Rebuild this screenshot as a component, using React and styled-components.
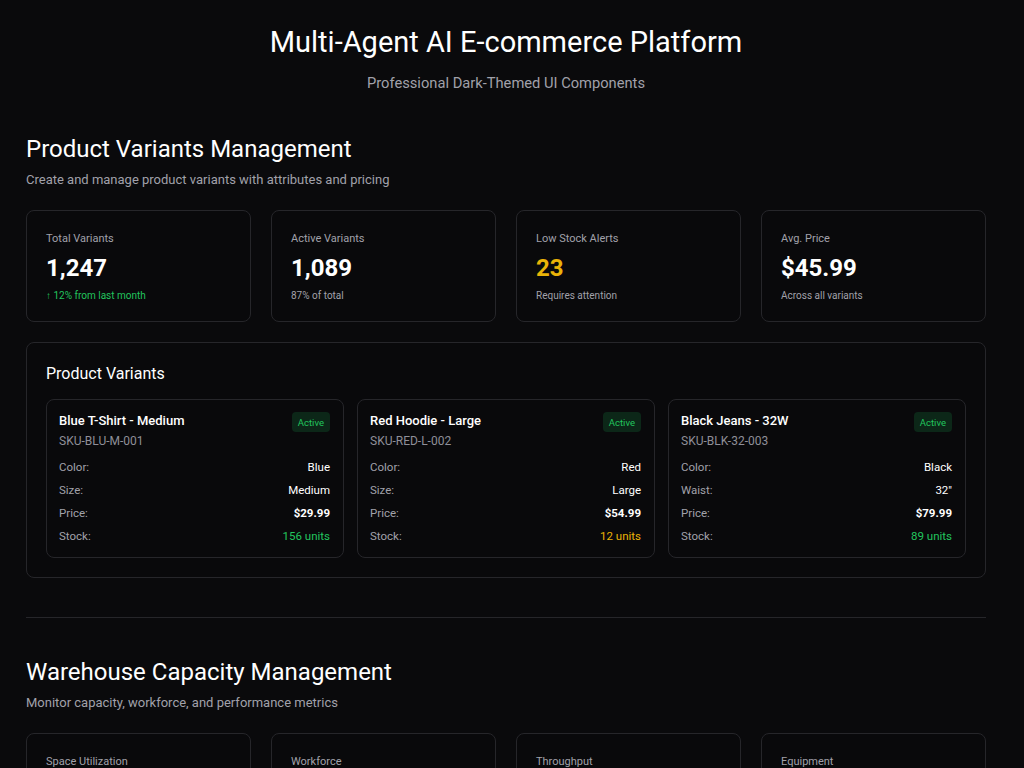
import React from "react";
import styled, { createGlobalStyle } from "styled-components";

const Global = createGlobalStyle`
  html, body { margin: 0; padding: 0; }
  body {
    background: #0a0a0c;
    color: #fafafa;
    font-family: Roboto, "Liberation Sans", Arial, sans-serif;
  }
  * { box-sizing: border-box; }
`;

const Page = styled.div`
  max-width: 1009px;
  padding: 24px 23px 40px 26px;
`;

const Header = styled.header`
  text-align: center;
  margin-bottom: 41px;
`;

const Title = styled.h1`
  margin: 0;
  font-size: 29px;
  line-height: 36px;
  font-weight: 400;
  color: #ffffff;
`;

const Subtitle = styled.p`
  margin: 13px 0 0;
  font-size: 14.7px;
  line-height: 20px;
  color: #a1a1aa;
`;

const Section = styled.section``;

const SectionTitle = styled.h2`
  margin: 0;
  font-size: 24px;
  line-height: 30px;
  font-weight: 400;
  color: #ffffff;
`;

const SectionDesc = styled.p`
  margin: 7px 0 21px;
  font-size: 13px;
  line-height: 18px;
  color: #a1a1aa;
`;

const StatGrid = styled.div`
  display: grid;
  grid-template-columns: repeat(4, 1fr);
  gap: 20px;
`;

const Card = styled.div`
  background: #09090b;
  border: 1px solid #26262a;
  border-radius: 8px;
`;

const StatCard = styled(Card)`
  padding: 20px 19px 18px;
  display: flex;
  flex-direction: column;
`;

const StatLabel = styled.div`
  font-size: 11px;
  line-height: 16px;
  color: #a1a1aa;
`;

const StatValue = styled.div`
  margin-top: 7px;
  font-size: 24px;
  line-height: 28px;
  font-weight: 700;
  color: ${(p) => p.$color || "#ffffff"};
`;

const StatSub = styled.div`
  margin-top: 7px;
  font-size: 10px;
  line-height: 14px;
  color: ${(p) => p.$color || "#a1a1aa"};
`;

const Panel = styled(Card)`
  margin-top: 20px;
  padding: 20px 19px 19px;
`;

const PanelTitle = styled.h3`
  margin: 0 0 14px;
  font-size: 16px;
  line-height: 22px;
  font-weight: 400;
  color: #ffffff;
`;

const VariantGrid = styled.div`
  display: grid;
  grid-template-columns: repeat(3, 1fr);
  gap: 13px;
`;

const VariantCard = styled(Card)`
  padding: 12px 13px 13px 12px;
`;

const VariantHead = styled.div`
  display: flex;
  justify-content: space-between;
  align-items: flex-start;
`;

const VariantName = styled.div`
  font-size: 13px;
  line-height: 18px;
  font-weight: 500;
  color: #ffffff;
`;

const Sku = styled.div`
  margin-top: 3px;
  font-size: 12px;
  line-height: 16px;
  color: #8f8f98;
`;

const Badge = styled.span`
  display: inline-flex;
  align-items: center;
  height: 20px;
  padding: 0 6px;
  border-radius: 4px;
  background: rgba(34, 197, 94, 0.16);
  color: #22c55e;
  font-size: 9.5px;
`;

const Rows = styled.div`
  margin-top: 10px;
  display: flex;
  flex-direction: column;
  gap: 7px;
`;

const Row = styled.div`
  display: flex;
  justify-content: space-between;
  font-size: 11.5px;
  line-height: 16px;
`;

const RowLabel = styled.span`
  color: #a1a1aa;
`;

const RowValue = styled.span`
  color: ${(p) => p.$color || "#ffffff"};
  font-weight: ${(p) => (p.$bold ? 700 : 400)};
`;

const Divider = styled.hr`
  margin: 39px 0 39px;
  border: 0;
  height: 1px;
  background: #26262a;
`;

const ZoneList = styled.div`
  display: flex;
  flex-direction: column;
  gap: 16px;
`;

const ZoneRow = styled.div`
  display: flex;
  flex-direction: column;
  gap: 6px;
`;

const ZoneHead = styled.div`
  display: flex;
  justify-content: space-between;
  font-size: 11.5px;
  color: #a1a1aa;
`;

const Track = styled.div`
  height: 8px;
  border-radius: 4px;
  background: #1c1c20;
  overflow: hidden;
`;

const Fill = styled.div`
  height: 100%;
  border-radius: 4px;
  background: ${(p) => p.$color};
`;

const AgentGrid = styled.div`
  display: grid;
  grid-template-columns: repeat(2, 1fr);
  gap: 13px;
`;

const variants = [
  {
    name: "Blue T-Shirt - Medium",
    sku: "SKU-BLU-M-001",
    rows: [
      ["Color:", "Blue"],
      ["Size:", "Medium"],
      ["Price:", "$29.99", true],
      ["Stock:", "156 units", false, "#22c55e"],
    ],
  },
  {
    name: "Red Hoodie - Large",
    sku: "SKU-RED-L-002",
    rows: [
      ["Color:", "Red"],
      ["Size:", "Large"],
      ["Price:", "$54.99", true],
      ["Stock:", "12 units", false, "#eab308"],
    ],
  },
  {
    name: "Black Jeans - 32W",
    sku: "SKU-BLK-32-003",
    rows: [
      ["Color:", "Black"],
      ["Waist:", "32\""],
      ["Price:", "$79.99", true],
      ["Stock:", "89 units", false, "#22c55e"],
    ],
  },
];

const zones = [
  ["Zone A - Electronics", 87, "#eab308"],
  ["Zone B - Apparel", 64, "#22c55e"],
  ["Zone C - Home Goods", 92, "#ef4444"],
  ["Zone D - Overflow", 41, "#22c55e"],
];

const agents = [
  { name: "Inventory Agent", id: "AGT-INV-01", rows: [["Status:", "Running", "#22c55e"], ["Tasks today:", "1,284"], ["Avg. latency:", "120 ms"]] },
  { name: "Pricing Agent", id: "AGT-PRC-02", rows: [["Status:", "Running", "#22c55e"], ["Tasks today:", "842"], ["Avg. latency:", "210 ms"]] },
  { name: "Fulfillment Agent", id: "AGT-FUL-03", rows: [["Status:", "Degraded", "#eab308"], ["Tasks today:", "516"], ["Avg. latency:", "480 ms"]] },
  { name: "Support Agent", id: "AGT-SUP-04", rows: [["Status:", "Running", "#22c55e"], ["Tasks today:", "2,031"], ["Avg. latency:", "95 ms"]] },
];

function Stat({ label, value, sub, valueColor, subColor }) {
  return (
    <StatCard>
      <StatLabel>{label}</StatLabel>
      <StatValue $color={valueColor}>{value}</StatValue>
      <StatSub $color={subColor}>{sub}</StatSub>
    </StatCard>
  );
}

export default function App() {
  return (
    <>
      <Global />
      <Page>
        <Header>
          <Title>Multi-Agent AI E-commerce Platform</Title>
          <Subtitle>Professional Dark-Themed UI Components</Subtitle>
        </Header>

        <Section>
          <SectionTitle>Product Variants Management</SectionTitle>
          <SectionDesc>Create and manage product variants with attributes and pricing</SectionDesc>
          <StatGrid>
            <Stat label="Total Variants" value="1,247" sub="↑ 12% from last month" subColor="#22c55e" />
            <Stat label="Active Variants" value="1,089" sub="87% of total" />
            <Stat label="Low Stock Alerts" value="23" valueColor="#eab308" sub="Requires attention" />
            <Stat label="Avg. Price" value="$45.99" sub="Across all variants" />
          </StatGrid>
          <Panel>
            <PanelTitle>Product Variants</PanelTitle>
            <VariantGrid>
              {variants.map((v) => (
                <VariantCard key={v.sku}>
                  <VariantHead>
                    <div>
                      <VariantName>{v.name}</VariantName>
                      <Sku>{v.sku}</Sku>
                    </div>
                    <Badge>Active</Badge>
                  </VariantHead>
                  <Rows>
                    {v.rows.map(([l, val, bold, color]) => (
                      <Row key={l}>
                        <RowLabel>{l}</RowLabel>
                        <RowValue $bold={bold} $color={color}>{val}</RowValue>
                      </Row>
                    ))}
                  </Rows>
                </VariantCard>
              ))}
            </VariantGrid>
          </Panel>
        </Section>

        <Divider />

        <Section>
          <SectionTitle>Warehouse Capacity Management</SectionTitle>
          <SectionDesc>Monitor capacity, workforce, and performance metrics</SectionDesc>
          <StatGrid>
            <Stat label="Space Utilization" value="78%" valueColor="#eab308" sub="12,480 of 16,000 m²" />
            <Stat label="Workforce" value="142" sub="On shift: 118" />
            <Stat label="Throughput" value="3,842" sub="↑ 8% orders / day" subColor="#22c55e" />
            <Stat label="Equipment" value="96%" sub="Operational uptime" />
          </StatGrid>
          <Panel>
            <PanelTitle>Zone Capacity</PanelTitle>
            <ZoneList>
              {zones.map(([name, pct, color]) => (
                <ZoneRow key={name}>
                  <ZoneHead>
                    <span>{name}</span>
                    <span>{pct}%</span>
                  </ZoneHead>
                  <Track>
                    <Fill $color={color} style={{ width: `${pct}%` }} />
                  </Track>
                </ZoneRow>
              ))}
            </ZoneList>
          </Panel>
        </Section>

        <Divider />

        <Section>
          <SectionTitle>Agent Activity Monitor</SectionTitle>
          <SectionDesc>Track AI agent status, workload, and response times</SectionDesc>
          <StatGrid>
            <Stat label="Active Agents" value="12" sub="All regions" />
            <Stat label="Tasks Completed" value="4,673" sub="↑ 15% from yesterday" subColor="#22c55e" />
            <Stat label="Errors" value="7" valueColor="#eab308" sub="Last 24 hours" />
            <Stat label="Avg. Response" value="180ms" sub="Across all agents" />
          </StatGrid>
          <Panel>
            <PanelTitle>Agents</PanelTitle>
            <AgentGrid>
              {agents.map((a) => (
                <VariantCard key={a.id}>
                  <VariantHead>
                    <div>
                      <VariantName>{a.name}</VariantName>
                      <Sku>{a.id}</Sku>
                    </div>
                    <Badge>Active</Badge>
                  </VariantHead>
                  <Rows>
                    {a.rows.map(([l, val, color]) => (
                      <Row key={l}>
                        <RowLabel>{l}</RowLabel>
                        <RowValue $color={color}>{val}</RowValue>
                      </Row>
                    ))}
                  </Rows>
                </VariantCard>
              ))}
            </AgentGrid>
          </Panel>
        </Section>
      </Page>
    </>
  );
}
